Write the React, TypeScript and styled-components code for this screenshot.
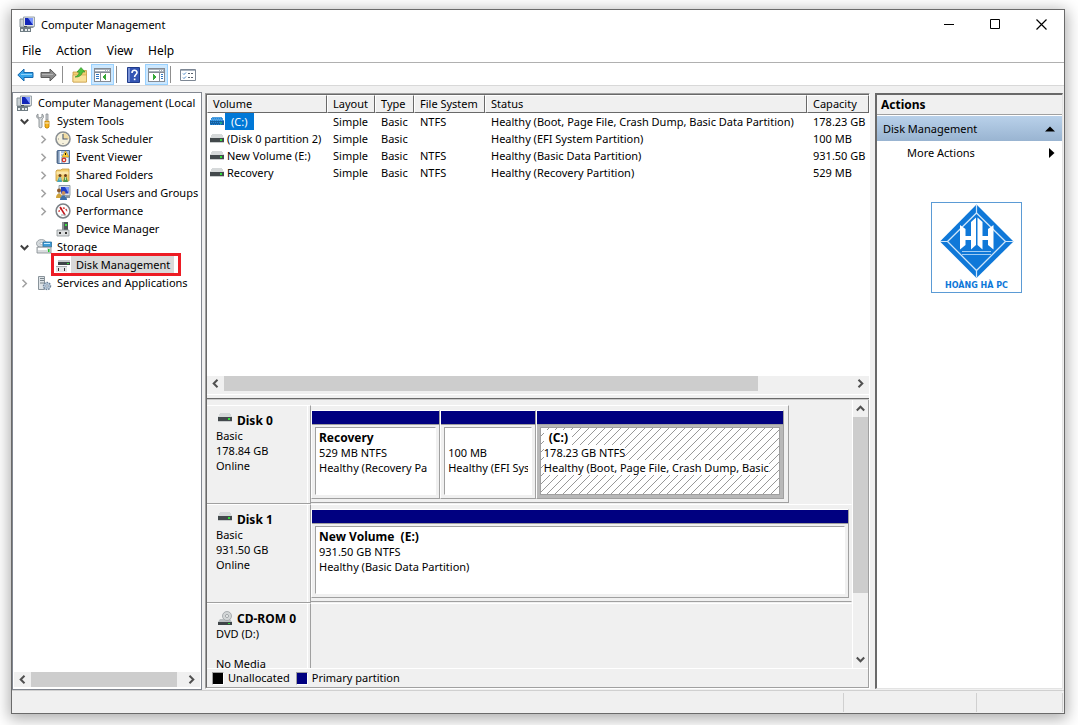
import React from "react";
import styled, { createGlobalStyle, css } from "styled-components";

const GlobalStyle = createGlobalStyle`
  * { box-sizing: border-box; }
  html, body { margin: 0; padding: 0; background: #fff; }
  body, button { font-family: "Noto Sans", "Open Sans", sans-serif; font-size: 11px; line-height: 18px; color: #000; }
  button { border: 0; padding: 0; margin: 0; background: transparent; }
  ul { list-style: none; margin: 0; padding: 0; }
  b { font-size: 12px; }
  svg { display: block; flex: none; }
`;

const Desktop = styled.div`
  height: 100vh;
  padding: 9px 13px 11px 11px;
  display: flex;
  overflow: hidden;
`;

const Window = styled.div`
  flex: 1;
  min-width: 0;
  display: flex;
  flex-direction: column;
  border: 1px solid #6a6a6a;
  background: #f0f0f0;
  box-shadow: 0 3px 14px 2px rgba(0, 0, 0, 0.32);
`;

const TitleBar = styled.header`
  height: 29px;
  display: flex;
  align-items: center;
  background: #fff;
  padding-left: 7px;
  gap: 5px;
`;

const Title = styled.h1`
  flex: 1;
  margin: 0;
  font-size: 11px;
  font-weight: 400;
`;

const CaptionButtons = styled.div`
  display: flex;
`;

const CaptionButton = styled.button`
  width: 46px;
  height: 28px;
  display: grid;
  place-items: center;
`;

const MenuBar = styled.nav`
  height: 24px;
  display: flex;
  align-items: center;
  gap: 15px;
  padding: 0 10px;
  background: #fff;
  border-bottom: 1px solid #b0b0b0;
  button { font-size: 12px; }
`;

const ToolBar = styled.div`
  height: 23px;
  display: flex;
  align-items: center;
  background: #fff;
  border-bottom: 1px solid #d8d8d8;
  padding: 1px 0 0 2px;
`;

const ToolButton = styled.button<{ $on?: boolean }>`
  width: 23px;
  height: 21px;
  display: grid;
  place-items: center;
  ${(p) => p.$on && css`
    background: #cce8ff;
    border: 1px solid #99d1ff;
  `}
`;

const ToolDivider = styled.span`
  width: 1px;
  height: 17px;
  margin: 0 5px 0 2px;
  background: #8f8f8f;
`;

const Panes = styled.main`
  flex: 1;
  min-height: 0;
  display: grid;
  grid-template-columns: 190px minmax(0, 1fr) 188px;
  grid-template-rows: minmax(0, 1fr);
  padding: 6px 1px 0 0;
`;

const TreePane = styled.aside`
  display: flex;
  flex-direction: column;
  border: 1px solid #828790;
  background: #fff;
  padding: 1px 1px 2px;
  overflow: hidden;
`;

const Tree = styled.ul`
  flex: 1;
  overflow: hidden;
`;

const TreeRow = styled.li<{ $level: number }>`
  position: relative;
  height: 18px;
  display: flex;
  align-items: center;
  white-space: nowrap;
  padding-left: ${(p) => (p.$level === 0 ? 2 : p.$level * 19 - 17)}px;
`;

const Expander = styled.button`
  width: 16px;
  height: 16px;
  margin-right: 4px;
  flex: none;
  display: grid;
  place-items: center;
`;

const TreeLabel = styled.button<{ $selected?: boolean }>`
  height: 18px;
  flex: none;
  padding: 0 4px 0 5px;
  text-align: left;
  ${(p) => p.$selected && css`background: #d9d9d9;`}
`;

const Marker = styled.span`
  position: absolute;
  left: 37px;
  top: -3px;
  width: 130px;
  height: 23px;
  border: 3px solid #ed1c24;
  pointer-events: none;
`;

const HScroll = styled.div`
  height: 15px;
  flex: none;
  display: flex;
  background: #f0f0f0;
`;

const ScrollButton = styled.button`
  width: 17px;
  height: 15px;
  flex: none;
  display: grid;
  place-items: center;
`;

const Track = styled.div<{ $vertical?: boolean }>`
  flex: 1;
  display: flex;
  flex-direction: ${(p) => (p.$vertical ? "column" : "row")};
`;

const Thumb = styled.div<{ $share: number }>`
  flex: 0 0 ${(p) => p.$share}%;
  background: #cdcdcd;
`;

const Center = styled.section`
  display: grid;
  grid-template-rows: minmax(0, 306fr) minmax(0, 288fr);
  margin: 1px 5px 1px 3px;
  border-left: 1px solid #a0a0a0;
  border-top: 1px solid #a0a0a0;
  border-right: 1px solid #fff;
  border-bottom: 1px solid #fff;
`;

const VolumePane = styled.div`
  display: flex;
  flex-direction: column;
  background: #fff;
  border-left: 1px solid #696969;
  border-top: 1px solid #696969;
  overflow: hidden;
`;

const TableArea = styled.div`
  flex: 1;
  overflow: hidden;
`;

const VolumeTable = styled.table`
  width: 100%;
  table-layout: fixed;
  border-collapse: separate;
  border-spacing: 0;
  white-space: nowrap;
`;

const HeadCell = styled.th`
  height: 18px;
  padding: 0 0 0 5px;
  font-weight: 400;
  line-height: 16px;
  text-align: left;
  background: #f0f0f0;
  border-top: 1px solid #fff;
  border-left: 1px solid #fff;
  border-right: 1px solid #696969;
  border-bottom: 1px solid #696969;
  overflow: hidden;
`;

const Cell = styled.td`
  height: 17px;
  line-height: 17px;
  padding: 0 0 0 6px;
  overflow: hidden;
`;

const VolumeCell = styled(Cell)`
  padding-left: 3px;
`;

const VolumeName = styled.div<{ $selected?: boolean }>`
  display: flex;
  align-items: center;
  gap: ${(p) => (p.$selected ? 1 : 3)}px;
  span {
    ${(p) => p.$selected && css`background: #0078d7; color: #fff; padding: 0 6px;`}
  }
`;

const Splitter = styled.div`
  flex: none;
  height: 9px;
  background: #f0f0f0;
  border-bottom: 2px solid #696969;
  padding-top: 3px;
  &::before {
    content: "";
    display: block;
    height: 4px;
    border-top: 1px solid #fff;
    border-bottom: 1px solid #c8c8c8;
  }
`;

const DiskPane = styled.div`
  display: flex;
  flex-direction: column;
  border-left: 1px solid #696969;
  border-right: 1px solid #a0a0a0;
  border-bottom: 1px solid #a0a0a0;
  background: #f0f0f0;
  overflow: hidden;
`;

const DiskScroller = styled.div`
  flex: 1;
  min-height: 0;
  display: flex;
`;

const DiskList = styled.div`
  flex: 1;
  min-width: 0;
  padding-top: 5px;
  overflow: hidden;
  border-right: 1px solid #fff;
`;

const VScroll = styled.div`
  width: 15px;
  flex: none;
  display: flex;
  flex-direction: column;
  button { width: 15px; height: 17px; }
`;

const DiskRow = styled.div`
  height: 99px;
  display: grid;
  grid-template-columns: 104px minmax(0, 1fr);
`;

const DiskInfo = styled.div`
  border-top: 1px solid #fff;
  border-right: 1px solid #a0a0a0;
  border-bottom: 1px solid #a0a0a0;
  box-shadow: inset -2px 0 #f0f0f0, inset -3px 0 #fff;
  padding: 7px 0 0 9px;
  line-height: 15px;
  p { margin: 0; min-height: 15px; }
`;

const DiskName = styled.div`
  display: flex;
  gap: 5px;
  padding-left: 2px;
  font-size: 12px;
  font-weight: 700;
  height: 15px;
`;

const DiskFrame = styled.div<{ $width?: string; $empty?: boolean }>`
  width: ${(p) => p.$width ?? "100%"};
  height: 98px;
  display: flex;
  border-top: 1px solid #fff;
  border-bottom: 1px solid ${(p) => (p.$empty ? "#f0f0f0" : "#a0a0a0")};
  border-right: 1px solid ${(p) => (p.$width ? "#a0a0a0" : "transparent")};
  padding: 4px ${(p) => (p.$width ? 4 : 2)}px 3px 0;
`;

const Partition = styled.div<{ $grow: number; $selected?: boolean }>`
  flex: ${(p) => p.$grow} 1 0;
  min-width: 0;
  display: flex;
  flex-direction: column;
  border: 1px solid #a0a0a0;
  border-top-color: #fff;
  border-left-color: #fff;
  background: ${(p) => (p.$selected ? "#b8b8b8" : "#f0f0f0")};
`;

const PartitionBar = styled.div`
  height: 14px;
  flex: none;
  background: #000080;
  border-bottom: 1px solid #a0a0a0;
`;

const hatch =
  "url(\"data:image/svg+xml,%3Csvg xmlns='http://www.w3.org/2000/svg' width='8' height='8' shape-rendering='crispEdges'%3E%3Cpath d='M0 8L8 0' stroke='%23989898'/%3E%3C/svg%3E\")";

const PartitionBody = styled.div<{ $selected?: boolean }>`
  flex: 1;
  margin: 2px 3px 3px 3px;
  padding: 2px 3px 0 3px;
  line-height: 15px;
  white-space: nowrap;
  background: #fff;
  border: 1px solid #a0a0a0;
  overflow: hidden;
  p { margin: 0; height: 15px; overflow: hidden; }
  ${(p) =>
    p.$selected
      ? css`
          background: #fff ${hatch};
          p { width: fit-content; max-width: 100%; background: #fff; }
          p:first-child { padding: 0 4px 0 5px; }
        `
      : css`
          border-right-color: #fff;
          border-bottom-color: #fff;
        `}
`;

const Legend = styled.div`
  height: 19px;
  flex: none;
  display: flex;
  align-items: center;
  border-top: 1px solid #fff;
  padding-left: 5px;
`;

const Swatch = styled.span<{ $color: string }>`
  width: 12px;
  height: 13px;
  margin-right: 4px;
  background: ${(p) => p.$color};
  border: 1px solid #a0a0a0;
  border-right-color: #fff;
  border-bottom-color: #fff;
`;

const LegendText = styled.span`
  margin-right: 6px;
`;

const ActionsPane = styled.aside`
  background: #fff;
  border: 1px solid #e3e3e3;
  border-top: 2px solid #696969;
  border-left: 2px solid #696969;
  margin-bottom: 1px;
  margin-top: 1px;
`;

const ActionsHead = styled.h2`
  margin: 0;
  height: 20px;
  padding-left: 4px;
  line-height: 19px;
  font-size: 12px;
  font-weight: 700;
  background: #f0f0f0;
  border-bottom: 1px solid #a0a0a0;
`;

const ActionRow = styled.button<{ $group?: boolean }>`
  width: 100%;
  height: 24px;
  display: flex;
  align-items: center;
  justify-content: space-between;
  padding: 0 7px 0 ${(p) => (p.$group ? 6 : 30)}px;
  ${(p) => p.$group && css`
    height: 25px;
    margin-top: 1px;
    background: linear-gradient(#b9d1ea, #99b4d1);
  `}
`;

const LogoBox = styled.div`
  width: 91px;
  height: 91px;
  margin: 37px 0 0 54px;
  border: 1px solid #5b9bd5;
`;

const StatusBar = styled.footer`
  height: 23px;
  display: flex;
  justify-content: flex-end;
  border-top: 1px solid #d0d0d0;
  padding: 2px 1px 1px 0;
`;

const StatusCell = styled.span<{ $width: number }>`
  width: ${(p) => p.$width}px;
  border-right: 1px solid #d0d0d0;
`;

/* ---------- icons ---------- */

const ComputerIcon = () => (
  <svg width="17" height="17" viewBox="0 0 17 17">
    <path d="M1 3h5v8H1z" fill="#c9d0d4" stroke="#8a9499" />
    <path d="M4.500 1h11v9.500h-11z" fill="#dfe3e6" stroke="#9aa4aa" />
    <path d="M6 2h8v7H6z" fill="#1226b8" />
    <path d="M9 2h5v7z" fill="#7d98ff" />
    <path d="M8 11h6l1 1H7z" fill="#8a9499" />
    <path d="M1 11h11v5H1z" fill="#6f7c83" />
    <path d="M2 13h2v2H2zM6 13h2v2H6zM9 13h2v2H9z" fill="#e8ecee" />
    <path d="M5 10h3v1H5z" fill="#4a5459" />
  </svg>
);

const ToolsIcon = () => (
  <svg width="16" height="16" viewBox="0 0 16 16">
    <path d="M2 1v3l2 1 2-1V1c2 1 2 4 0 5v8c0 1-3 1-3 0V6C0 5 0 2 2 1z" fill="#d9dcde" stroke="#7a8084" strokeWidth=".8" />
    <path d="M10 1h2v6h-2z" fill="#cfd3d6" stroke="#7a8084" strokeWidth=".7" />
    <path d="M9 8h4v6l-1 1h-2l-1-1z" fill="#f5b21a" stroke="#b87c00" strokeWidth=".8" />
    <path d="M9 10h4" stroke="#fff" strokeWidth=".8" />
  </svg>
);

const ClockIcon = () => (
  <svg width="16" height="16" viewBox="0 0 16 16">
    <circle cx="8" cy="8" r="7" fill="#f6f1dc" stroke="#8a8f93" strokeWidth="1.6" />
    <path d="M8 2a6 6 0 0 1 6 6H8z" fill="#f0dba0" />
    <path d="M8 3v5h4" fill="none" stroke="#4c5b70" strokeWidth="1.1" />
    <path d="M3 8h1M8 13v-1M13 8h-1" stroke="#777" strokeWidth=".8" />
  </svg>
);

const EventIcon = () => (
  <svg width="16" height="16" viewBox="0 0 16 16">
    <path d="M2.500 1.500h12v13h-12z" fill="#a9c1de" stroke="#4c6b94" />
    <path d="M5 2h1v12H5z" fill="#fff" />
    <path d="M8 9h5v5H8zM6 4h3v1H6zM6 7h2v1H6z" fill="#eef3f9" />
    <path d="M1 3h3M1 5h3M1 7h3M1 9h3M1 11h3M1 13h3" stroke="#596d86" strokeWidth=".9" />
    <path d="M10.500 2l3.500 6H7z" fill="#ffd23c" stroke="#c79100" strokeWidth=".6" />
    <path d="M10.500 4v2" stroke="#000" strokeWidth=".9" />
    <circle cx="9" cy="11" r="2.400" fill="#d33a2c" />
    <path d="M8 10l2 2M10 10l-2 2" stroke="#fff" strokeWidth=".8" />
  </svg>
);

const FolderUsersIcon = () => (
  <svg width="16" height="16" viewBox="0 0 16 16">
    <path d="M1 4l1-1h4l1-1h7v12H1z" fill="#f3cd6b" stroke="#c4973a" strokeWidth=".8" />
    <path d="M1.500 4.500h12v3h-12z" fill="#fbe6a8" />
    <circle cx="5" cy="8.500" r="1.500" fill="#6b3f1c" />
    <circle cx="10.500" cy="8.500" r="1.500" fill="#6b3f1c" />
    <path d="M4 10h2l1 5H2z" fill="#49a6b8" />
    <path d="M9.500 10h2l1.500 5H8z" fill="#4e9b4b" />
    <path d="M5 10v3M10.500 10v3" stroke="#f3e6c8" strokeWidth=".8" />
  </svg>
);

const UsersIcon = () => (
  <svg width="16" height="16" viewBox="0 0 16 16">
    <path d="M4 .500h11v10H4z" fill="#dfe3e6" stroke="#8b969d" strokeWidth=".9" />
    <path d="M6 2h7.500v6.500H6z" fill="#2440c4" />
    <path d="M10 2h3.500v6z" fill="#7d9bff" />
    <path d="M11 11h4v2h-4z" fill="#8b969d" />
    <circle cx="4" cy="5.500" r="2" fill="#8c5a2c" />
    <circle cx="8.500" cy="8" r="2" fill="#c98f5a" />
    <path d="M1 13c0-6 6-6 6 0z" fill="#d0a43c" />
    <path d="M5 15c0-6 7-6 7 0z" fill="#3d6fa8" />
  </svg>
);

const PerformanceIcon = () => (
  <svg width="16" height="16" viewBox="0 0 16 16">
    <circle cx="8" cy="8" r="6.900" fill="#fff" stroke="#7b8186" strokeWidth="1.500" />
    <path d="M4 9a4 4 0 0 1 8 0" fill="none" stroke="#d03a34" strokeWidth="1.300" strokeDasharray="2 1" />
    <path d="M5 4l5 8" stroke="#c4161c" strokeWidth="1.500" />
    <path d="M6 12h5" stroke="#9aa1a6" />
  </svg>
);

const DeviceIcon = () => (
  <svg width="16" height="16" viewBox="0 0 16 16">
    <path d="M7 1h6v9H7z" fill="#4e5558" />
    <path d="M7 1h2v8H7z" fill="#8d9396" />
    <path d="M10 3h2v2h-2z" fill="#38e03e" />
    <path d="M2 9h12v6H2z" fill="#dcdedf" stroke="#8e9498" strokeWidth=".8" />
    <path d="M4 11h2v2H4zM10 11h2v2h-2z" fill="#333" />
  </svg>
);

const StorageIcon = () => (
  <svg width="16" height="16" viewBox="0 0 16 16">
    <ellipse cx="5.500" cy="4.500" rx="5" ry="4" fill="#d5dadd" stroke="#8d959a" strokeWidth=".8" />
    <ellipse cx="5.500" cy="4.500" rx="1.500" ry="1" fill="#fff" stroke="#8d959a" strokeWidth=".5" />
    <path d="M7 3h8.500v5H7z" fill="#3c9bd6" stroke="#2a6f9e" strokeWidth=".8" />
    <path d="M8 4h6v1H8z" fill="#c9ecff" />
    <path d="M1 8h14v6H1z" fill="#d9dcde" stroke="#82898d" strokeWidth=".8" />
    <path d="M2 9h9v2H2z" fill="#fff" />
    <path d="M12 10h1.500v3H12z" fill="#25c52f" />
  </svg>
);

const DiskMgmtIcon = () => (
  <svg width="16" height="16" viewBox="0 0 16 16" shapeRendering="crispEdges">
    <path d="M3 3h12v2H3z" fill="#c4c8ca" />
    <path d="M3 5h12v3H3z" fill="#3f4548" />
    <path d="M12 6h2v1h-2z" fill="#34df3b" />
    <path d="M1 9h11v6H1z" fill="#e3e5e6" />
    <path d="M1 9h11v1H1z" fill="#a9aeb1" />
    <path d="M3 11h1v3H3zM9 11h1v3H9z" fill="#333" />
  </svg>
);

const ServicesIcon = () => (
  <svg width="16" height="16" viewBox="0 0 16 16">
    <path d="M2.500 1.500h6v13h-6z" fill="#dfe4e8" stroke="#89939a" />
    <path d="M4 3.500h4M4 5.500h4M4 8h4" stroke="#6c7880" strokeWidth=".9" />
    <circle cx="11" cy="11" r="3.500" fill="#b9cbdc" stroke="#6d8197" strokeWidth="1.400" strokeDasharray="1.600 1" />
    <circle cx="11" cy="11" r="1.200" fill="#fff" stroke="#6d8197" strokeWidth=".7" />
  </svg>
);

const DriveIcon = ({ selected }: { selected?: boolean }) => (
  <svg width="14" height="9" viewBox="0 0 14 9" shapeRendering="crispEdges">
    <path d="M2 0h10l2 4H0z" fill={selected ? "#4fa0e0" : "#d6d9da"} />
    <path d="M0 4h14v4H0z" fill={selected ? "#17609f" : "#43494c"} />
    {selected ? (
      <path d="M1 1.500h1M3 1.500h1M5 1.500h1M7 1.500h1M9 1.500h1M11 1.500h1M0 3.500h1M2 3.500h1M4 3.500h1M6 3.500h1M8 3.500h1M10 3.500h1M12 3.500h1M1 5.500h1M3 5.500h1M5 5.500h1M7 5.500h1M9 5.500h1M0 7.500h1M2 7.500h1M4 7.500h1M6 7.500h1M8 7.500h1M10 7.500h1" stroke="#1f86de" />
    ) : (
      <path d="M0 8h14v1H0z" fill="#c9cccd" />
    )}
    <path d="M10 5h2v2h-2z" fill={selected ? "#19a58a" : "#30dd3a"} />
  </svg>
);

const CdDriveIcon = () => (
  <svg width="14" height="15" viewBox="0 0 14 15">
    <path d="M2 8h10l2 3H0z" fill="#b9bec0" />
    <circle cx="9" cy="5" r="4.500" fill="#d3d6d7" stroke="#9aa0a3" strokeWidth=".8" />
    <circle cx="9" cy="5" r="1.500" fill="#fff" stroke="#8b9194" strokeWidth=".8" />
    <path d="M0 11h14v3H0z" fill="#3f4548" />
    <path d="M10 12h2v1h-2z" fill="#30dd3a" />
  </svg>
);

const ArrowIcon = ({ back }: { back?: boolean }) => (
  <svg width="17" height="14" viewBox="0 0 17 14">
    {back ? (
      <path d="M.8 7L7 1v3.500h9v5H7V13z" fill="#35a4ea" stroke="#1668ad" strokeLinejoin="round" />
    ) : (
      <path d="M16.200 7L10 1v3.500H1v5h9V13z" fill="#8c8c8c" stroke="#5c5c5c" strokeLinejoin="round" />
    )}
    <path d={back ? "M4 6.500h11" : "M2 6.500h11"} stroke={back ? "#8fd3fb" : "#b5b5b5"} />
  </svg>
);

const FolderUpIcon = () => (
  <svg width="16" height="16" viewBox="0 0 16 16">
    <path d="M1 5h5l1-1.500h7.500V15H1z" fill="#f2ce73" stroke="#c79b40" strokeWidth=".8" />
    <path d="M1 8h13.500v7H1z" fill="#f9e09a" stroke="#c79b40" strokeWidth=".6" />
    <path d="M3 10c3-1 4-3 4-5H5l4-4.500L13 5h-2.500C10 8 7 10.500 3 10z" fill="#4fc23c" stroke="#2c8a22" strokeWidth=".6" />
  </svg>
);

const PaneIcon = ({ right }: { right?: boolean }) => (
  <svg width="17" height="14" viewBox="0 0 17 14" shapeRendering="crispEdges">
    <path d="M.5.500h16v13H.5z" fill="#fff" stroke="#858b94" />
    <path d="M1 1h15v3H1z" fill="#a9b1bb" />
    <path d="M1 2h10v1H1zM12 2h1v1h-1zM14 2h1v1h-1z" fill="#fff" />
    <path d="M1 4.500h15" stroke="#858b94" />
    <path d={right ? "M11.500 5v8" : "M6.500 5v8"} stroke="#858b94" />
    <path d={right ? "M13 6.500h2M13 8.500h2M13 10.500h2" : "M2 6.500h3M2 8.500h3M2 10.500h3"} stroke="#2f76c2" />
    <path d={right ? "M5 6v6l4-3z" : "M12 6v6L8 9z"} fill="#36a838" />
  </svg>
);

const HelpIcon = () => (
  <svg width="13" height="16" viewBox="0 0 13 16">
    <path d="M.5.500h12v15H.5z" fill="#3455b4" stroke="#1f3b8a" />
    <path d="M1 1h2v14H1z" fill="#7a93d8" />
    <path d="M5 6c0-3.500 5-3.500 5-.5C10 7.500 7.600 7.500 7.600 10" fill="none" stroke="#fff" strokeWidth="1.600" />
    <path d="M6.800 11.500h1.700v1.700H6.800z" fill="#fff" />
  </svg>
);

const ListIcon = () => (
  <svg width="16" height="12" viewBox="0 0 16 12">
    <path d="M.5.500h15v11H.5z" fill="#fff" stroke="#7d8794" />
    <path d="M1 1h14v1H1z" fill="#a9b3c0" />
    <path d="M3 4.500l1 1 2-2M3 8.500l1 1 2-2" fill="none" stroke="#2f76c2" strokeWidth=".9" />
    <path d="M8 4.500h2M11 4.500h2M8 8.500h2M11 8.500h2" stroke="#59636f" />
  </svg>
);

const turns = { right: 0, down: 90, left: 180, up: 270 };

const Chevron = ({ dir, color = "#505050", weight = 2 }: { dir: keyof typeof turns; color?: string; weight?: number }) => (
  <svg width="9" height="9" viewBox="0 0 9 9">
    <path d="M2.500 .8L6.300 4.500 2.500 8.200" fill="none" stroke={color} strokeWidth={weight} transform={`rotate(${turns[dir]} 4.500 4.500)`} />
  </svg>
);

const Logo = () => (
  <svg width="89" height="89" viewBox="0 0 89 89">
    <path d="M44.500 1.500L81.500 38.500 44.500 75 8 38.500z" fill="#0f78d8" />
    <path d="M44.500 10L73.500 38.500 44.500 67.500 15.500 38.500z" fill="none" stroke="#cfe6fa" strokeWidth="1.300" />
    <path d="M44.500 2v8M8 38.500h7.500M73.500 38.500h8M44.500 67.500v7" stroke="#cfe6fa" strokeWidth="1.200" />
    <path d="M28 22l5.500 4v7H39V19l5-4.500V42l-5 4.500V37h-5.500v5L28 46.500z" fill="#fff" />
    <path d="M61.500 22L56 26v7h-5.500V19l-5-4.500V42l5 4.500V37H56v5l5.500 4.500z" fill="#fff" />
    <path d="M30 48.500h29M30 51.500h29" stroke="#9fccf4" strokeWidth="1" />
    <text x="44.500" y="85" textAnchor="middle" fontFamily="DejaVu Sans, sans-serif" fontWeight="700" fontSize="8" fill="#0f78d8">HOÀNG HÀ PC</text>
  </svg>
);

/* ---------- data ---------- */

type Node = { label: string; level: number; icon: React.ReactNode; open?: boolean; closed?: boolean; selected?: boolean };

const nodes: Node[] = [
  { label: "Computer Management (Local", level: 0, icon: <ComputerIcon /> },
  { label: "System Tools", level: 1, icon: <ToolsIcon />, open: true },
  { label: "Task Scheduler", level: 2, icon: <ClockIcon />, closed: true },
  { label: "Event Viewer", level: 2, icon: <EventIcon />, closed: true },
  { label: "Shared Folders", level: 2, icon: <FolderUsersIcon />, closed: true },
  { label: "Local Users and Groups", level: 2, icon: <UsersIcon />, closed: true },
  { label: "Performance", level: 2, icon: <PerformanceIcon />, closed: true },
  { label: "Device Manager", level: 2, icon: <DeviceIcon /> },
  { label: "Storage", level: 1, icon: <StorageIcon />, open: true },
  { label: "Disk Management", level: 2, icon: <DiskMgmtIcon />, selected: true },
  { label: "Services and Applications", level: 1, icon: <ServicesIcon />, closed: true },
];

const columns: [string, number | undefined][] = [
  ["Volume", 120], ["Layout", 48], ["Type", 39], ["File System", 71], ["Status", 322], ["Capacity", undefined],
];

const volumes = [
  ["(C:)", "Simple", "Basic", "NTFS", "Healthy (Boot, Page File, Crash Dump, Basic Data Partition)", "178.23 GB"],
  ["(Disk 0 partition 2)", "Simple", "Basic", "", "Healthy (EFI System Partition)", "100 MB"],
  ["New Volume (E:)", "Simple", "Basic", "NTFS", "Healthy (Basic Data Partition)", "931.50 GB"],
  ["Recovery", "Simple", "Basic", "NTFS", "Healthy (Recovery Partition)", "529 MB"],
];

type Part = { grow: number; lines: string[]; selected?: boolean };
type Disk = { name: string; cd?: boolean; info: string[]; width?: string; parts: Part[] };

const disks: Disk[] = [
  {
    name: "Disk 0",
    info: ["Basic", "178.84 GB", "Online"],
    width: "88.4%",
    parts: [
      { grow: 129, lines: ["Recovery", "529 MB NTFS", "Healthy (Recovery Pa"] },
      { grow: 95, lines: ["", "100 MB", "Healthy (EFI Sys"] },
      { grow: 250, lines: ["(C:)", "178.23 GB NTFS", "Healthy (Boot, Page File, Crash Dump, Basic"], selected: true },
    ],
  },
  {
    name: "Disk 1",
    info: ["Basic", "931.50 GB", "Online"],
    parts: [{ grow: 1, lines: ["New Volume\u00a0 (E:)", "931.50 GB NTFS", "Healthy (Basic Data Partition)"] }],
  },
  { name: "CD-ROM 0", cd: true, info: ["DVD (D:)", "", "No Media"], parts: [] },
];

export default function App() {
  return (
    <>
      <GlobalStyle />
      <Desktop>
        <Window>
          <TitleBar>
            <ComputerIcon />
            <Title>Computer Management</Title>
            <CaptionButtons>
              <CaptionButton aria-label="Minimize">
                <svg width="11" height="11" viewBox="0 0 11 11"><path d="M0 5.500h10" stroke="#000" /></svg>
              </CaptionButton>
              <CaptionButton aria-label="Maximize">
                <svg width="11" height="11" viewBox="0 0 11 11"><path d="M.5.500h9v9h-9z" fill="none" stroke="#000" /></svg>
              </CaptionButton>
              <CaptionButton aria-label="Close">
                <svg width="11" height="11" viewBox="0 0 11 11"><path d="M.5.500l10 10M10.500.500l-10 10" stroke="#000" strokeWidth="1.200" /></svg>
              </CaptionButton>
            </CaptionButtons>
          </TitleBar>
          <MenuBar>
            <button>File</button>
            <button>Action</button>
            <button>View</button>
            <button>Help</button>
          </MenuBar>
          <ToolBar>
            <ToolButton aria-label="Back"><ArrowIcon back /></ToolButton>
            <ToolButton aria-label="Forward"><ArrowIcon /></ToolButton>
            <ToolDivider />
            <ToolButton aria-label="Up one level"><FolderUpIcon /></ToolButton>
            <ToolButton $on aria-label="Show console tree"><PaneIcon /></ToolButton>
            <ToolDivider />
            <ToolButton aria-label="Help"><HelpIcon /></ToolButton>
            <ToolButton $on aria-label="Show action pane"><PaneIcon right /></ToolButton>
            <ToolDivider />
            <ToolButton aria-label="Properties"><ListIcon /></ToolButton>
          </ToolBar>

          <Panes>
            <TreePane>
              <Tree>
                {nodes.map((n) => (
                  <TreeRow key={n.label} $level={n.level}>
                    {n.level > 0 && (
                      <Expander aria-label={`Toggle ${n.label}`}>
                        {n.open && <Chevron dir="down" color="#404040" />}
                        {n.closed && <Chevron dir="right" color="#a0a0a0" weight={1.5} />}
                      </Expander>
                    )}
                    {n.icon}
                    <TreeLabel $selected={n.selected}>{n.label}</TreeLabel>
                    {n.selected && <Marker />}
                  </TreeRow>
                ))}
              </Tree>
              <HScroll>
                <ScrollButton aria-label="Scroll left"><Chevron dir="left" /></ScrollButton>
                <Track><Thumb $share={96} /></Track>
                <ScrollButton aria-label="Scroll right"><Chevron dir="right" /></ScrollButton>
              </HScroll>
            </TreePane>

            <Center>
              <VolumePane>
                <TableArea>
                  <VolumeTable>
                    <colgroup>
                      {columns.map(([name, width]) => <col key={name} width={width} />)}
                    </colgroup>
                    <thead>
                      <tr>{columns.map(([name]) => <HeadCell key={name}>{name}</HeadCell>)}</tr>
                    </thead>
                    <tbody>
                      {volumes.map(([name, ...rest], i) => (
                        <tr key={name}>
                          <VolumeCell>
                            <VolumeName $selected={i === 0}>
                              <DriveIcon selected={i === 0} />
                              <span>{name}</span>
                            </VolumeName>
                          </VolumeCell>
                          {rest.map((text, c) => <Cell key={c}>{text}</Cell>)}
                        </tr>
                      ))}
                    </tbody>
                  </VolumeTable>
                </TableArea>
                <HScroll>
                  <ScrollButton aria-label="Scroll left"><Chevron dir="left" /></ScrollButton>
                  <Track><Thumb $share={85} /></Track>
                  <ScrollButton aria-label="Scroll right"><Chevron dir="right" /></ScrollButton>
                </HScroll>
                <Splitter />
              </VolumePane>

              <DiskPane>
                <DiskScroller>
                  <DiskList>
                    {disks.map((d) => (
                      <DiskRow key={d.name}>
                        <DiskInfo>
                          <DiskName>
                            {d.cd ? <CdDriveIcon /> : <DriveIcon />}
                            <span>{d.name}</span>
                          </DiskName>
                          {d.info.map((line, i) => <p key={i}>{line}</p>)}
                        </DiskInfo>
                        <DiskFrame $width={d.width} $empty={d.cd}>
                          {d.parts.map((p) => (
                            <Partition key={p.lines[1]} $grow={p.grow} $selected={p.selected}>
                              <PartitionBar />
                              <PartitionBody $selected={p.selected}>
                                <p><b>{p.lines[0]}</b></p>
                                <p>{p.lines[1]}</p>
                                <p>{p.lines[2]}</p>
                              </PartitionBody>
                            </Partition>
                          ))}
                        </DiskFrame>
                      </DiskRow>
                    ))}
                  </DiskList>
                  <VScroll>
                    <ScrollButton aria-label="Scroll up"><Chevron dir="up" /></ScrollButton>
                    <Track $vertical><Thumb $share={75} /></Track>
                    <ScrollButton aria-label="Scroll down"><Chevron dir="down" /></ScrollButton>
                  </VScroll>
                </DiskScroller>
                <Legend>
                  <Swatch $color="#000" />
                  <LegendText>Unallocated</LegendText>
                  <Swatch $color="#000080" />
                  <LegendText>Primary partition</LegendText>
                </Legend>
              </DiskPane>
            </Center>

            <ActionsPane>
              <ActionsHead>Actions</ActionsHead>
              <ActionRow $group>
                Disk Management
                <svg width="10" height="6" viewBox="0 0 10 6"><path d="M0 5.500L5 .5l5 5z" /></svg>
              </ActionRow>
              <ActionRow>
                More Actions
                <svg width="6" height="10" viewBox="0 0 6 10"><path d="M0 0l5.500 5L0 10z" /></svg>
              </ActionRow>
              <LogoBox><Logo /></LogoBox>
            </ActionsPane>
          </Panes>

          <StatusBar>
            <StatusCell $width={1} />
            <StatusCell $width={133} />
            <StatusCell $width={86} />
          </StatusBar>
        </Window>
      </Desktop>
    </>
  );
}
